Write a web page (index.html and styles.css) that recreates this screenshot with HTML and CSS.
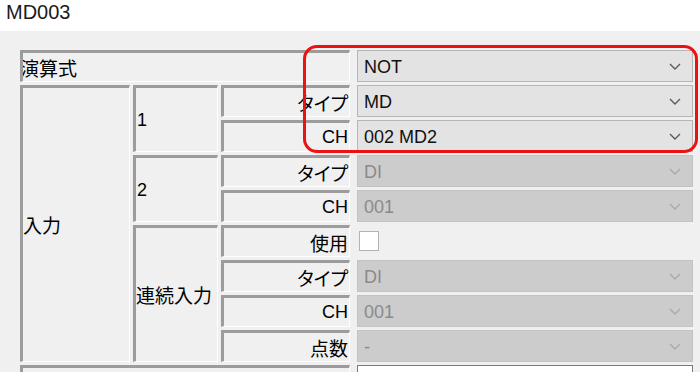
FILE: index.html
```html
<!DOCTYPE html>
<html lang="ja">
<head>
<meta charset="utf-8">
<title>MD003</title>
<link rel="stylesheet" href="styles.css">
</head>
<body>
<header class="title">MD003</header>
<main class="panel">
  <div class="grid">
    <div class="cell left jp clip" style="grid-row:1;grid-column:1/4">演算式</div>
    <div class="ctl" style="grid-row:1"><div class="combo"><span>NOT</span><svg class="chev" viewBox="0 0 12 7"><polyline points="1,1 6,6 11,1"/></svg></div></div>

    <div class="cell left jp" style="grid-row:2/10;grid-column:1">入力</div>

    <div class="cell left num" style="grid-row:2/4;grid-column:2">1</div>
    <div class="cell right jp" style="grid-row:2;grid-column:3">タイプ</div>
    <div class="ctl" style="grid-row:2"><div class="combo"><span>MD</span><svg class="chev" viewBox="0 0 12 7"><polyline points="1,1 6,6 11,1"/></svg></div></div>
    <div class="cell right" style="grid-row:3;grid-column:3">CH</div>
    <div class="ctl" style="grid-row:3"><div class="combo"><span>002 MD2</span><svg class="chev" viewBox="0 0 12 7"><polyline points="1,1 6,6 11,1"/></svg></div></div>

    <div class="cell left num" style="grid-row:4/6;grid-column:2">2</div>
    <div class="cell right jp" style="grid-row:4;grid-column:3">タイプ</div>
    <div class="ctl" style="grid-row:4"><div class="combo disabled"><span>DI</span><svg class="chev" viewBox="0 0 12 7"><polyline points="1,1 6,6 11,1"/></svg></div></div>
    <div class="cell right" style="grid-row:5;grid-column:3">CH</div>
    <div class="ctl" style="grid-row:5"><div class="combo disabled"><span>001</span><svg class="chev" viewBox="0 0 12 7"><polyline points="1,1 6,6 11,1"/></svg></div></div>

    <div class="cell left jp" style="grid-row:6/10;grid-column:2">連続入力</div>
    <div class="cell right jp" style="grid-row:6;grid-column:3">使用</div>
    <div class="ctl" style="grid-row:6"><span class="check"></span></div>
    <div class="cell right jp" style="grid-row:7;grid-column:3">タイプ</div>
    <div class="ctl" style="grid-row:7"><div class="combo disabled"><span>DI</span><svg class="chev" viewBox="0 0 12 7"><polyline points="1,1 6,6 11,1"/></svg></div></div>
    <div class="cell right" style="grid-row:8;grid-column:3">CH</div>
    <div class="ctl" style="grid-row:8"><div class="combo disabled"><span>001</span><svg class="chev" viewBox="0 0 12 7"><polyline points="1,1 6,6 11,1"/></svg></div></div>
    <div class="cell right jp" style="grid-row:9;grid-column:3">点数</div>
    <div class="ctl" style="grid-row:9"><div class="combo disabled"><span>-</span><svg class="chev" viewBox="0 0 12 7"><polyline points="1,1 6,6 11,1"/></svg></div></div>

    <div class="cell left jp" style="grid-row:10;grid-column:1/4"></div>
    <div class="ctl" style="grid-row:10"><div class="textbox"></div></div>
  </div>
  <div class="highlight"></div>
</main>
</body>
</html>
```
FILE: styles.css
```css
html, body {
  margin: 0;
  padding: 0;
  height: 100%;
  overflow: hidden;
}
body {
  background: #ffffff;
  font-family: "Liberation Sans", Arial, "Noto Sans CJK JP", sans-serif;
  font-size: 18px;
  color: #000;
}
.title {
  height: 31px;
  box-sizing: border-box;
  padding: 1px 0 0 6px;
  font-family: "Liberation Sans", Arial, sans-serif;
  font-size: 20px;
  line-height: 22px;
  color: #1a1a1a;
}
.panel {
  position: relative;
  background: #f0f0f0;
  height: 341px;
  padding: 19px 0 0 20px;
  box-sizing: border-box;
}
.grid {
  display: grid;
  grid-template-columns: 110px 85px 129px 343px;
  grid-auto-rows: 32px;
  column-gap: 3px;
  row-gap: 3px;
}
.cell {
  box-sizing: border-box;
  border-style: solid;
  border-width: 3px 1px 1px 3px;
  border-color: #9c9c9c #ffffff #ffffff #9c9c9c;
  display: flex;
  align-items: center;
  white-space: nowrap;
  overflow: hidden;
  line-height: 1;
}
.left { justify-content: flex-start; padding-left: 0; }
.right { justify-content: flex-end; padding-right: 1px; }
.num { padding-left: 1px; }
.clip { text-indent: -3px; }
.jp {
  font-family: "Noto Sans CJK JP", sans-serif;
  font-size: 19px;
  font-feature-settings: "palt";
}
.ctl {
  grid-column: 4;
  display: flex;
  align-items: center;
  padding-left: 4px;
}
.combo {
  box-sizing: border-box;
  width: 336px;
  height: 32px;
  background: #e3e3e3;
  border: 1px solid #b6b6b6;
  display: flex;
  align-items: center;
  justify-content: space-between;
  padding: 0 11px 0 6px;
  color: #111;
}
.combo span { line-height: 1; padding-top: 1px; }
.chev {
  width: 12px;
  height: 7px;
  fill: none;
  stroke: #5a5a5a;
  stroke-width: 1.4;
}
.combo.disabled {
  background: #cccccc;
  border-color: #c3c3c3;
  color: #8a8a8a;
}
.combo.disabled .chev { stroke: #a9a9a9; }
.check {
  box-sizing: border-box;
  width: 20px;
  height: 20px;
  margin-left: 2px;
  background: #ffffff;
  border: 1px solid #b3b3b3;
}
.textbox {
  box-sizing: border-box;
  width: 336px;
  height: 32px;
  background: #ffffff;
  border: 1px solid #7a7a7a;
}
.highlight {
  position: absolute;
  left: 303px;
  top: 14px;
  width: 395px;
  height: 108px;
  box-sizing: border-box;
  border: 3px solid #ee1111;
  border-radius: 14px;
  pointer-events: none;
}
```
